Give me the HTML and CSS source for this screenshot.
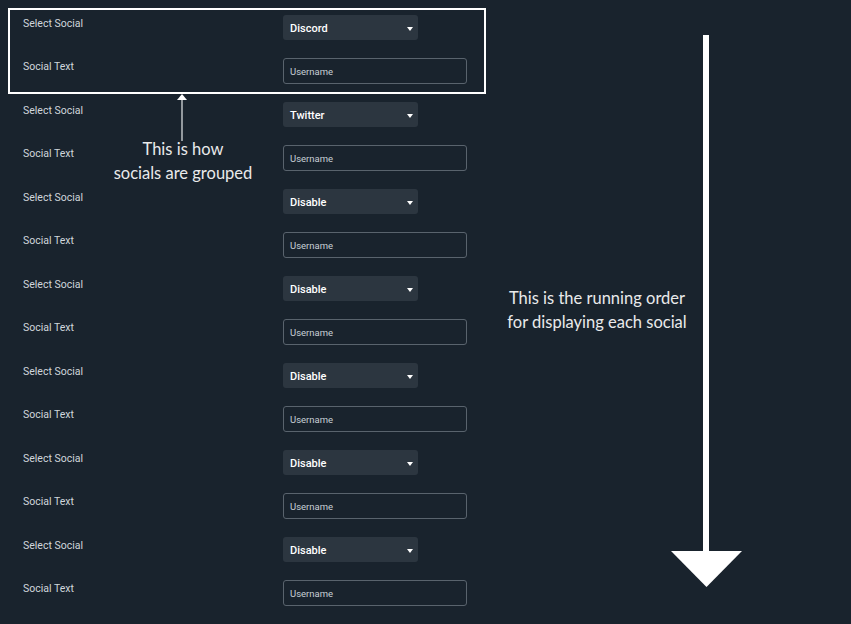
FILE: index.html
```html
<!DOCTYPE html>
<html>
<head>
<meta charset="utf-8">
<link rel="stylesheet" href="styles.css">
</head>
<body>
<div class="page">
  <div class="form">
    <div class="group">
      <div class="row row-select"><span class="label">Select Social</span><div class="select">Discord<span class="caret"></span></div></div>
      <div class="row row-input"><span class="label">Social Text</span><div class="input">Username</div></div>
    </div>
    <div class="group">
      <div class="row row-select"><span class="label">Select Social</span><div class="select">Twitter<span class="caret"></span></div></div>
      <div class="row row-input"><span class="label">Social Text</span><div class="input">Username</div></div>
    </div>
    <div class="group">
      <div class="row row-select"><span class="label">Select Social</span><div class="select">Disable<span class="caret"></span></div></div>
      <div class="row row-input"><span class="label">Social Text</span><div class="input">Username</div></div>
    </div>
    <div class="group">
      <div class="row row-select"><span class="label">Select Social</span><div class="select">Disable<span class="caret"></span></div></div>
      <div class="row row-input"><span class="label">Social Text</span><div class="input">Username</div></div>
    </div>
    <div class="group">
      <div class="row row-select"><span class="label">Select Social</span><div class="select">Disable<span class="caret"></span></div></div>
      <div class="row row-input"><span class="label">Social Text</span><div class="input">Username</div></div>
    </div>
    <div class="group">
      <div class="row row-select"><span class="label">Select Social</span><div class="select">Disable<span class="caret"></span></div></div>
      <div class="row row-input"><span class="label">Social Text</span><div class="input">Username</div></div>
    </div>
    <div class="group">
      <div class="row row-select"><span class="label">Select Social</span><div class="select">Disable<span class="caret"></span></div></div>
      <div class="row row-input"><span class="label">Social Text</span><div class="input">Username</div></div>
    </div>
  </div>

  <div class="highlight"></div>
  <svg class="small-arrow" width="12" height="48" viewBox="0 0 12 48">
    <line x1="6" y1="4" x2="6" y2="47" stroke="#d6d9dc" stroke-width="1.3"/>
    <polygon points="1,6 6,0 11,6" fill="#ffffff"/>
  </svg>
  <div class="note note-group">This is how<br>socials are grouped</div>

  <svg class="big-arrow" width="72" height="554" viewBox="0 0 72 554">
    <rect x="33" y="0" width="6" height="517" fill="#ffffff"/>
    <polygon points="1,516 72,516 36.5,552" fill="#ffffff"/>
  </svg>
  <div class="note note-order">This is the running order<br>for displaying each social</div>
</div>
</body>
</html>
```
FILE: styles.css
```css
html, body {
  margin: 0;
  padding: 0;
  background: #19232d;
}
.page {
  position: relative;
  width: 851px;
  height: 624px;
  overflow: hidden;
  font-family: Roboto, "Liberation Sans", sans-serif;
}
.form {
  display: flex;
  flex-direction: column;
  padding: 15px 0 0 23px;
}
.group {
  display: flex;
  flex-direction: column;
}
.row {
  display: flex;
  align-items: flex-start;
}
.row-select {
  height: 43px;
}
.row-input {
  height: 44px;
}
.label {
  width: 260px;
  font-size: 10.5px;
  font-weight: 400;
  color: #d0d6dc;
  line-height: 13px;
  padding-top: 1.5px;
}
.row-input .label {
  padding-top: 2px;
}
.select {
  position: relative;
  width: 135px;
  height: 25px;
  box-sizing: border-box;
  padding-left: 7px;
  background: #2c3640;
  border-radius: 3px;
  font-size: 11px;
  font-weight: 500;
  color: #ffffff;
  line-height: 27px;
}
.caret {
  position: absolute;
  right: 5px;
  top: 12px;
  width: 0;
  height: 0;
  border-left: 3.5px solid transparent;
  border-right: 3.5px solid transparent;
  border-top: 4px solid #ffffff;
}
.input {
  width: 184px;
  height: 26px;
  box-sizing: border-box;
  border: 1px solid #59636d;
  border-radius: 3px;
  padding-left: 6px;
  font-size: 9.5px;
  color: #c8cfd5;
  line-height: 26px;
}
.highlight {
  position: absolute;
  left: 8px;
  top: 8px;
  width: 474px;
  height: 82px;
  border: 2px solid #ffffff;
}
.small-arrow {
  position: absolute;
  left: 176px;
  top: 94px;
}
.note {
  position: absolute;
  font-family: Lato, "Open Sans", sans-serif;
  font-size: 16.5px;
  line-height: 24px;
  color: #e9eaeb;
  text-align: center;
}
.note-group {
  left: 103px;
  width: 160px;
  top: 137px;
}
.note-order {
  left: 482px;
  width: 230px;
  top: 286px;
}
.big-arrow {
  position: absolute;
  left: 670px;
  top: 35px;
}
```
